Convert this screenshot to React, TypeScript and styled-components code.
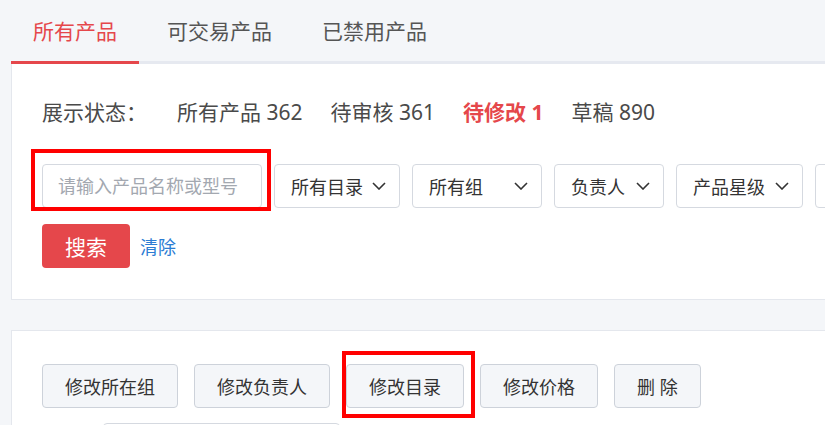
import React from 'react';
import styled, { createGlobalStyle } from 'styled-components';

const GlobalStyle = createGlobalStyle`
  html, body {
    margin: 0;
    padding: 0;
    background: #f4f6f9;
    overflow: hidden;
  }
  body {
    font-family: "Noto Sans", "Noto Sans CJK SC", sans-serif;
    color: #333;
  }
`;

const Root = styled.div`
  width: 1200px;
  padding-left: 11px;
`;

const TabBar = styled.div`
  display: flex;
  gap: 6px;
  height: 61px;
  border-bottom: 3px solid #e6e9f0;
`;

const Tab = styled.div<{ $active?: boolean }>`
  display: flex;
  align-items: center;
  padding: 0 22px 2px;
  font-size: 21px;
  color: ${(p) => (p.$active ? '#e5474b' : '#555')};
  border-bottom: 3px solid ${(p) => (p.$active ? '#e5474b' : 'transparent')};
  margin-bottom: -3px;
`;

const Panel = styled.div<{ $top?: number }>`
  background: #fff;
  border: 1px solid #e4e7ed;
  border-top: ${(p) => (p.$top ? '1px solid #e4e7ed' : 'none')};
  margin-top: ${(p) => p.$top || 0}px;
  padding: 33px 30px 31px;
`;

const StatusRow = styled.div`
  display: flex;
  align-items: center;
  height: 28px;
  font-size: 21px;
  color: #4a4a4a;
`;

const StatusLabel = styled.span`
  margin-right: 30px;
`;

const StatusItem = styled.span<{ $active?: boolean }>`
  margin-right: 28px;
  color: ${(p) => (p.$active ? '#e5474b' : '#4a4a4a')};
  font-weight: ${(p) => (p.$active ? 700 : 400)};
`;

const FilterRow = styled.div`
  display: flex;
  gap: 12px;
  margin-top: 39px;
`;

const Marked = styled.div<{ $t: number; $l: number; $r: number; $b: number }>`
  position: relative;
  display: flex;
  &::after {
    content: '';
    position: absolute;
    top: -${(p) => p.$t}px;
    left: -${(p) => p.$l}px;
    right: -${(p) => p.$r}px;
    bottom: -${(p) => p.$b}px;
    border: 4px solid #ff0000;
    pointer-events: none;
  }
`;

const SearchInput = styled.input`
  box-sizing: border-box;
  width: 220px;
  height: 44px;
  border: 1px solid #d5d9e0;
  border-radius: 4px;
  padding: 0 15px;
  font-family: inherit;
  font-size: 18px;
  outline: none;
  &::placeholder {
    color: #a3a8b0;
  }
`;

const Select = styled.div<{ $w: number }>`
  box-sizing: border-box;
  flex: none;
  width: ${(p) => p.$w}px;
  height: 44px;
  display: flex;
  align-items: center;
  justify-content: space-between;
  padding: 0 13px 0 16px;
  border: 1px solid #d5d9e0;
  border-radius: 4px;
  font-size: 18px;
  color: #333;
  background: #fff;
`;

const ActionRow = styled.div`
  display: flex;
  align-items: center;
  gap: 10px;
  margin-top: 16px;
`;

const SearchButton = styled.button`
  width: 88px;
  height: 44px;
  border: none;
  border-radius: 4px;
  background: #e5474b;
  color: #fff;
  font-family: inherit;
  font-size: 21px;
`;

const ClearLink = styled.a`
  color: #2b7cd3;
  font-size: 18px;
  cursor: pointer;
`;

const ButtonRow = styled.div`
  display: flex;
  gap: 16px;
`;

const GreyButton = styled.button`
  box-sizing: border-box;
  height: 44px;
  padding: 0 22px;
  border: 1px solid #cdd2da;
  border-radius: 4px;
  background: #f4f6f9;
  color: #333;
  font-family: inherit;
  font-size: 18px;
  white-space: pre;
`;

const SubRow = styled.div`
  margin-top: 15px;
  padding-left: 61px;
`;

const SubInput = styled.div`
  width: 235px;
  height: 44px;
  border: 1px solid #d5d9e0;
  border-radius: 4px;
  background: #fff;
`;

const Chevron = () => (
  <svg width="14" height="8" viewBox="0 0 14 8" fill="none">
    <polyline points="1,1 7,7 13,1" stroke="#333" strokeWidth="1.6" />
  </svg>
);

const selects = [
  { label: '所有目录', w: 126 },
  { label: '所有组', w: 130 },
  { label: '负责人', w: 110 },
  { label: '产品星级', w: 127 },
  { label: '', w: 127 },
];

const App: React.FC = () => {
  return (
    <Root>
      <GlobalStyle />
      <TabBar>
        <Tab $active>所有产品</Tab>
        <Tab>可交易产品</Tab>
        <Tab>已禁用产品</Tab>
      </TabBar>

      <Panel>
        <StatusRow>
          <StatusLabel>展示状态：</StatusLabel>
          <StatusItem>所有产品 362</StatusItem>
          <StatusItem>待审核 361</StatusItem>
          <StatusItem $active>待修改 1</StatusItem>
          <StatusItem>草稿 890</StatusItem>
        </StatusRow>

        <FilterRow>
          <Marked $t={15} $l={11} $r={9} $b={3}>
            <SearchInput placeholder="请输入产品名称或型号" />
          </Marked>
          {selects.map((item, index) => (
            <Select key={index} $w={item.w}>
              {item.label}
              <Chevron />
            </Select>
          ))}
        </FilterRow>

        <ActionRow>
          <SearchButton>搜索</SearchButton>
          <ClearLink>清除</ClearLink>
        </ActionRow>
      </Panel>

      <Panel $top={30}>
        <ButtonRow>
          <GreyButton>修改所在组</GreyButton>
          <GreyButton>修改负责人</GreyButton>
          <Marked $t={13} $l={4} $r={11} $b={10}>
            <GreyButton>修改目录</GreyButton>
          </Marked>
          <GreyButton>修改价格</GreyButton>
          <GreyButton>删 除</GreyButton>
        </ButtonRow>
        <SubRow>
          <SubInput />
        </SubRow>
      </Panel>
    </Root>
  );
};

export default App;
